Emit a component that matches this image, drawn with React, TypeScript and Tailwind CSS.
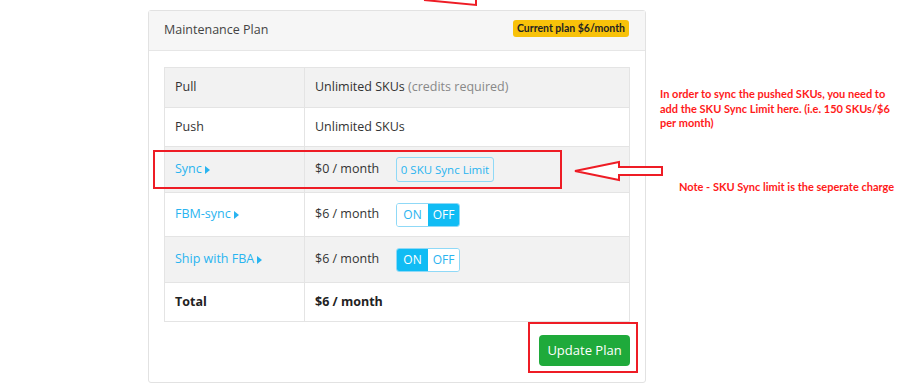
import React from 'react';

const ui = { fontFamily: '"Open Sans", "Noto Sans", sans-serif' };
const note = { fontFamily: 'Lato, "Open Sans", sans-serif' };

function Caret() {
  return (
    <svg width="5" height="8" viewBox="0 0 5 8" className="ml-[3px] inline-block">
      <path d="M0 0 L5 4 L0 8 Z" fill="#29b4f0" />
    </svg>
  );
}

function Toggle({ on }: { on: boolean }) {
  return (
    <div className="flex h-[24px] w-[64px] overflow-hidden rounded-[3px] border border-[#8fd9f7] text-[12px] leading-none">
      <span
        className={`flex flex-1 items-center justify-center ${on ? 'bg-[#10bcf4] text-white' : 'bg-white text-[#29b4f0]'}`}
      >
        ON
      </span>
      <span
        className={`flex flex-1 items-center justify-center ${on ? 'bg-white text-[#29b4f0]' : 'bg-[#10bcf4] text-white'}`}
      >
        OFF
      </span>
    </div>
  );
}

export default function App() {
  const cell = 'border border-[#e4e4e4] px-[10px] align-middle';
  return (
    <div className="relative h-[384px] w-[902px] overflow-hidden bg-white" style={ui}>
      <div className="flex pl-[148px] pt-[10px]">
        <div className="w-[498px] rounded-[3px] border border-[#e2e2e2] bg-white">
          <div className="flex h-[40px] items-center justify-between border-b border-[#e6e6e6] bg-[#f6f6f6] pl-[15px] pr-[16px]">
            <span className="text-[12.5px] text-[#444]">Maintenance Plan</span>
            <span
              className="-mt-[4px] rounded-[3px] bg-[#f8c20a] px-[4px] py-[1px] text-[10.5px] font-bold text-[#222]"
              style={note}
            >
              Current plan $6/month
            </span>
          </div>
          <div className="px-[15px] pb-[16px] pt-[16px]">
            <table className="w-[466px] border-collapse text-[12.5px] text-[#333]">
              <tbody>
                <tr className="h-[40px] bg-[#f2f2f2]">
                  <td className={`${cell} w-[140px]`}>Pull</td>
                  <td className={cell}>
                    Unlimited SKUs <span className="text-[#888]">(credits required)</span>
                  </td>
                </tr>
                <tr className="h-[39px] bg-white">
                  <td className={cell}>Push</td>
                  <td className={cell}>Unlimited SKUs</td>
                </tr>
                <tr className="h-[46px] bg-[#f2f2f2]">
                  <td className={cell}>
                    <span className="inline-flex items-center text-[#29b4f0]">
                      Sync
                      <Caret />
                    </span>
                  </td>
                  <td className={cell}>
                    <div className="flex items-center">
                      <span className="w-[81px]">$0 / month</span>
                      <span className="flex h-[25px] w-[98px] items-center justify-center rounded-[3px] border border-[#8fd9f7] text-[11.5px] text-[#29b4f0]">
                        0 SKU Sync Limit
                      </span>
                    </div>
                  </td>
                </tr>
                <tr className="h-[44px] bg-white">
                  <td className={cell}>
                    <span className="inline-flex items-center text-[#29b4f0]">
                      FBM-sync
                      <Caret />
                    </span>
                  </td>
                  <td className={cell}>
                    <div className="flex items-center">
                      <span className="w-[81px]">$6 / month</span>
                      <Toggle on={false} />
                    </div>
                  </td>
                </tr>
                <tr className="h-[46px] bg-[#f2f2f2]">
                  <td className={cell}>
                    <span className="inline-flex items-center text-[#29b4f0]">
                      Ship with FBA
                      <Caret />
                    </span>
                  </td>
                  <td className={cell}>
                    <div className="flex items-center">
                      <span className="w-[81px]">$6 / month</span>
                      <Toggle on={true} />
                    </div>
                  </td>
                </tr>
                <tr className="h-[39px] bg-white font-bold text-[#222]">
                  <td className={cell}>Total</td>
                  <td className={cell}>$6 / month</td>
                </tr>
              </tbody>
            </table>
            <div className="mt-[13px] flex justify-end">
              <button className="h-[31px] w-[91px] rounded-[4px] bg-[#1faa3b] text-[13px] text-white">
                Update Plan
              </button>
            </div>
          </div>
        </div>
      </div>

      {/* annotations laid over the screenshot */}
      <svg className="absolute left-0 top-0" width="902" height="384" viewBox="0 0 902 384" fill="none">
        <path d="M424 0 L476 5 L476 0" stroke="#ee1c25" strokeWidth="2" />
        <rect x="154" y="151" width="407" height="37" stroke="#ee1c25" strokeWidth="2" />
        <rect x="529" y="323" width="108" height="49" stroke="#ee1c25" strokeWidth="2" />
        <path
          d="M575 171 L619 162 L619 167 L662 167 L662 175 L619 175 L619 180 Z"
          fill="white"
          stroke="#ee1c25"
          strokeWidth="2"
          strokeLinejoin="miter"
        />
      </svg>
      <div
        className="absolute left-[660px] top-[87px] whitespace-nowrap text-[11px] font-bold leading-[14.5px] text-[#ff1a1a]"
        style={note}
      >
        In order to sync the pushed SKUs, you need to
        <br />
        add the SKU Sync Limit here. (i.e. 150 SKUs/$6
        <br />
        per month)
      </div>
      <div
        className="absolute left-[679px] top-[179px] whitespace-nowrap text-[11px] font-bold text-[#ff1a1a]"
        style={note}
      >
        Note - SKU Sync limit is the seperate charge
      </div>
    </div>
  );
}
